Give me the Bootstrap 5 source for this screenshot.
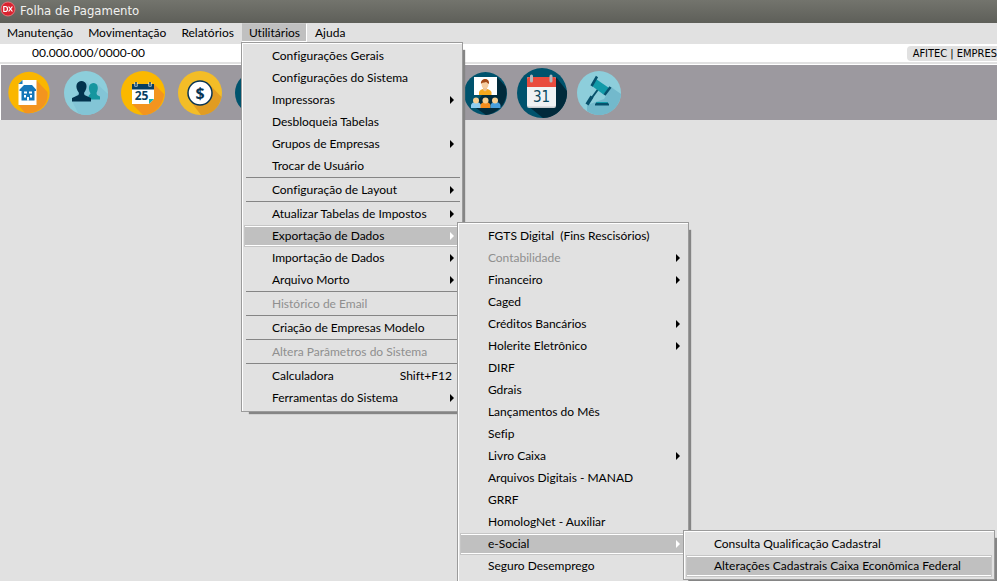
<!DOCTYPE html>
<html lang="pt-BR">
<head>
<meta charset="utf-8">
<meta name="viewport" content="width=device-width, initial-scale=1">
<title>Folha de Pagamento</title>
<link href="https://cdn.jsdelivr.net/npm/bootstrap@5.3.0/dist/css/bootstrap.min.css" rel="stylesheet">
<style>
body{background:#e1e1e1;color:#000;font:12px/22px Lato,"Open Sans",sans-serif;font-variant-ligatures:none}
button{font:inherit;color:inherit;background:none;border:0;padding:0;text-align:left}
.titlebar{height:23px;background:linear-gradient(#73746d,#5e5f59);color:#f2f2f0;font:13px/21px "DejaVu Sans Condensed","DejaVu Sans",sans-serif}
.titlebar svg{width:16px;height:17px}
.menubar{height:21px;z-index:10;gap:1px}
.top-item{height:19px;line-height:19px;padding:0 7px}
.top-item.open{background:#c0c0c0;border-bottom:1px solid #fff;border-right:1px solid #fff;border-top:1px solid #c9c9c9;line-height:17px;padding-right:6px}
.infobar{height:18px;line-height:18px;padding-left:32px}
.company{background:#e1e1e1;border-radius:4px 0 0 4px;height:15px;font:11px/15px "DejaVu Sans Condensed","DejaVu Sans",sans-serif;padding-left:6px}
.divider{height:3px;background:linear-gradient(#e1e1e1 66%,#fff 66%)}
.toolbar{height:55px;background:#9c999f;border-left:1px solid #fff}
.tool,.tool svg{display:block;width:57px;height:55px;flex:none}
.tool-skip{width:171px}
.pop{position:absolute;background:#e1e1e1;border:1px solid #9b9b9b;box-shadow:inset 1px 1px #fff,5px 5px 1px -3px #858585;padding:2px;margin:0;list-style:none;z-index:5}
.pop-main{top:19px;left:-1px;width:222px}
.pop-export,.pop-social{top:-3px;left:calc(100% - 3px)}
.pop-export{width:232px}
.pop-social{width:312px}
.entry{height:22px;padding:0 8px 0 28px;width:100%;display:flex;justify-content:space-between;align-items:center;white-space:pre}
.entry.more{padding-right:6px}
.entry.more::after{content:"";border:4px solid transparent;border-left:4px solid #000;border-right:0}
.entry.on{background:#c0c0c0;box-shadow:inset 0 0 0 1px #c6c6c6,inset 0 2px #fff,inset 0 -2px #fff}
.entry.on.more::after{border-left-color:#fff}
.entry:disabled{color:#8f8f8f}
.rule{height:2px;margin:0 0 0 2px;border-top:1px solid #858585}
</style>
<script src="https://cdn.jsdelivr.net/npm/bootstrap@5.3.0/dist/js/bootstrap.bundle.min.js"></script>
</head>
<body class="vh-100 overflow-hidden">
<header class="titlebar d-flex">
<svg viewBox="0 0 16 17" aria-hidden="true"><circle cx="8" cy="9" r="7" fill="#d9232f" stroke="#ef8288" stroke-width=".8"/><path d="M3.800 6.500v5h1.400c1.700 0 2.300-1.100 2.300-2.500S6.900 6.500 5.200 6.500zM8.600 6.500l3.800 5M12.400 6.500l-3.800 5" fill="none" stroke="#fff" stroke-width="1.200"/></svg>
<span class="ms-1">Folha de Pagamento</span>
</header>
<nav class="menubar d-flex position-relative" aria-label="Menu principal">
<button class="top-item">Manutenção</button>
<button class="top-item">Movimentação</button>
<button class="top-item">Relatórios</button>
<div class="position-relative">
<button class="top-item open d-block">Utilitários</button>
<ul class="pop pop-main">
<li><button class="entry">Configurações Gerais</button></li>
<li><button class="entry">Configurações do Sistema</button></li>
<li><button class="entry more">Impressoras</button></li>
<li><button class="entry">Desbloqueia Tabelas</button></li>
<li><button class="entry more">Grupos de Empresas</button></li>
<li><button class="entry">Trocar de Usuário</button></li>
<li class="rule"></li>
<li><button class="entry more">Configuração de Layout</button></li>
<li class="rule"></li>
<li><button class="entry more">Atualizar Tabelas de Impostos</button></li>
<li class="position-relative"><button class="entry more on">Exportação de Dados</button>
<ul class="pop pop-export">
<li><button class="entry">FGTS Digital  (Fins Rescisórios)</button></li>
<li><button class="entry more" disabled>Contabilidade</button></li>
<li><button class="entry more">Financeiro</button></li>
<li><button class="entry">Caged</button></li>
<li><button class="entry more">Créditos Bancários</button></li>
<li><button class="entry more">Holerite Eletrônico</button></li>
<li><button class="entry">DIRF</button></li>
<li><button class="entry">Gdrais</button></li>
<li><button class="entry">Lançamentos do Mês</button></li>
<li><button class="entry">Sefip</button></li>
<li><button class="entry more">Livro Caixa</button></li>
<li><button class="entry">Arquivos Digitais - MANAD</button></li>
<li><button class="entry">GRRF</button></li>
<li><button class="entry">HomologNet - Auxiliar</button></li>
<li class="position-relative"><button class="entry more on">e-Social</button>
<ul class="pop pop-social">
<li><button class="entry">Consulta Qualificação Cadastral</button></li>
<li><button class="entry on">Alterações Cadastrais Caixa Econômica Federal</button></li>
</ul></li>
<li class="pb-3"><button class="entry">Seguro Desemprego</button></li>
</ul></li>
<li><button class="entry more">Importação de Dados</button></li>
<li><button class="entry more">Arquivo Morto</button></li>
<li class="rule"></li>
<li><button class="entry" disabled>Histórico de Email</button></li>
<li class="rule"></li>
<li><button class="entry">Criação de Empresas Modelo</button></li>
<li class="rule"></li>
<li><button class="entry" disabled>Altera Parâmetros do Sistema</button></li>
<li class="rule"></li>
<li><button class="entry"><span>Calculadora</span><span>Shift+F12</span></button></li>
<li><button class="entry more">Ferramentas do Sistema</button></li>
</ul>
</div>
<button class="top-item">Ajuda</button>
</nav>
<div class="infobar bg-white d-flex justify-content-between align-items-center"><span>00.000.000/0000-00</span><span class="company text-nowrap">AFITEC | EMPRES</span></div>
<div class="divider"></div>
<main class="toolbar d-flex overflow-hidden">
<button class="tool" aria-label="Empresa"><svg viewBox="1 65 57 55"><circle cx="29" cy="92.500" r="20.700" fill="#fab600"/><path d="M36.500 80.500L47.500 92Q49 105 36 111.500 30 114 25 113L18.500 105z" fill="#f3941f"/><path d="M22.500 80h14v25h-18V84z" fill="#fff"/><path d="M18.500 84h4v-4z" fill="#1577b9"/><path d="M19.500 89.500L24 85h8l4 4.500V91H19.500zM21.500 90h13v10.500h-13z" fill="#1577b9"/><path d="M24 91.500h3v2h-3zm5 0h3v2h-3zm-5 3.500h2v2.500h-2zm6 0h2v2.500h-2zm-3 2h2v3.500h-2z" fill="#fff"/></svg></button>
<button class="tool" aria-label="Funcionários"><svg viewBox="58 65 57 55"><circle cx="86" cy="93" r="22" fill="#8dcedb"/><path d="M86 81l5 5 6-2 11 10c0 12-10 21-22 21-3 0-6-1-8-2l-6-12z" fill="#83c5d6"/><path d="M88.500 99.500V96l2-2.500C87 87 90 83 93.500 83s6 4 3 10l.5 2 3 1.500V99.500z" fill="#15969f"/><path d="M72 101.500V98l6.500-3 .5-2c-5-7-2-12 2.500-12s7.500 5 2.500 12l.5 2 6.500 3v3.500z" fill="#03334d"/></svg></button>
<button class="tool" aria-label="Calendário"><svg viewBox="115 65 57 55"><circle cx="143" cy="93" r="22" fill="#fbb800"/><path d="M154 84l10 10c-1 12-10 21-21 21l-11-11z" fill="#f3941f"/><path d="M132 85h22v14l-5 5h-17z" fill="#fff"/><path d="M132 84h22v5.500h-22z" fill="#093e61"/><path d="M136 82.500v4M150 82.500v4" stroke="#fff" stroke-width="3"/><path d="M136 82v4M150 82v4" stroke="#093e61" stroke-width="1.500"/><path d="M149 104v-5h5z" fill="#18b0b3"/><text x="141.500" y="100" text-anchor="middle" font-family="Open Sans" font-weight="700" font-size="12" fill="#093e61">25</text></svg></button>
<button class="tool" aria-label="Pagamento"><svg viewBox="172 65 57 55"><circle cx="200" cy="93" r="22" fill="#f3bd27"/><path d="M209 84l12.500 13C219 108 211 115 201 115l-10-13z" fill="#e19c22"/><circle cx="200" cy="93" r="12" fill="#fff" stroke="#083554" stroke-width="1.500"/><text x="200" y="98.500" text-anchor="middle" font-family="Open Sans" font-weight="700" font-size="16" fill="#083554">$</text></svg></button>
<button class="tool" aria-label="Relatório"><svg viewBox="229 65 57 55"><circle cx="257" cy="93" r="22" fill="#00536d"/></svg></button>
<div class="tool-skip flex-shrink-0"></div>
<button class="tool" aria-label="Treinamento"><svg viewBox="457 65 57 55"><circle cx="485.500" cy="93.500" r="21.500" fill="#00536d"/><path d="M497 77l9 10c3 13-6 26-20 28l-13-9z" fill="#012a3b"/><path d="M474 77h23v18h-23z" fill="#fff"/><path d="M479 95v-3q1-3 6-3.500 5 .5 6.500 3.500v3z" fill="#f6a81c"/><path d="M483 87h4v3l-2 1.500-2-1.500z" fill="#eec08e"/><ellipse cx="485" cy="84" rx="3.500" ry="4.500" fill="#f6cda0"/><path d="M481 84c-1-6 9-7 8 0-2-1-2-2-3-2-2 1-4 0-5 2z" fill="#a44a17"/><path d="M471 108v-3q1-3 5-3t5 3v3z" fill="#8ecdf0"/><path d="M480.500 108v-3q1-3 5-3t5 3v3z" fill="#f58d1d"/><path d="M490.500 108v-3q1-3 5-3t5 3v3z" fill="#479edb"/><g fill="#f7cf91"><circle cx="476" cy="100.500" r="3"/><circle cx="485.500" cy="100.500" r="3"/><circle cx="495" cy="100.500" r="3"/></g></svg></button>
<button class="tool" aria-label="Agenda"><svg viewBox="514 65 57 55"><circle cx="542" cy="93" r="25" fill="#00536d"/><path d="M556 77l11 14c1 14-10 27-24 27l-15-12z" fill="#012a3b"/><rect x="527" y="77" width="29" height="31" rx="2" fill="#c9cdd0"/><rect x="527" y="77" width="29" height="29.500" rx="2" fill="#f0f2f3"/><path d="M527 87v-8q0-2 2-2h25q2 0 2 2v8z" fill="#e94b3d"/><path d="M531.500 76v5M551 76v5" stroke="#b3b8bd" stroke-width="3" stroke-linecap="round"/><text x="541.500" y="101.500" text-anchor="middle" font-family="DejaVu Sans Condensed" font-size="15" fill="#09495f">31</text></svg></button>
<button class="tool" aria-label="Processos"><svg viewBox="571 65 57 55"><circle cx="599" cy="93" r="22" fill="#8dcedb"/><path d="M611 87l10 7c-1 12-10 21-22 21-5 0-9-2-12-4v-6l17-6z" fill="#73b9cc"/><path d="M599 88l-11 15" stroke="#07516c" stroke-width="2"/><path d="M592 96.500l-5 8" stroke="#07516c" stroke-width="3.500"/><path d="M596 79l13 9-5.500 6.500L592 86z" fill="#119aa8"/><path d="M597 76.500l-5.500 9.500M610.500 87l-6 8" stroke="#07516c" stroke-width="2.500"/><path d="M595 105.500v-1.500l2-2h10l2 2v1.500z" fill="#07516c"/><path d="M597 102h10l1 1h-12z" fill="#119aa8"/></svg></button>
</main>
</body>
</html>
